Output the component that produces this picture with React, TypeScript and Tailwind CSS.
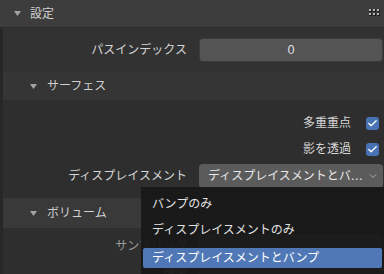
import { Check, ChevronDown } from 'lucide-react';

const FONT = 'font-["DejaVu_Sans","Noto_Sans_CJK_JP",sans-serif]';

function Tri() {
  return (
    <svg width="7" height="5" viewBox="0 0 7 5" className="shrink-0">
      <path d="M0 0 L7 0 L3.5 5 Z" fill="#a3a3a3" />
    </svg>
  );
}

function Grip() {
  return (
    <svg width="11" height="7" viewBox="0 0 11 7">
      {[0, 4, 8].map((x) =>
        [0, 4].map((y) => (
          <g key={`${x}-${y}`}>
            <rect x={x} y={y} width="3" height="3" fill="#1e1e1e" />
            <rect x={x} y={y} width="2" height="2" fill="#b4b4b4" />
          </g>
        ))
      )}
    </svg>
  );
}

function Checkbox() {
  return (
    <div className="w-[13px] h-[13px] rounded-[3px] bg-[#4772b3] flex items-center justify-center">
      <Check size={11} strokeWidth={3} color="#ffffff" />
    </div>
  );
}

export default function App() {
  return (
    <div className={`relative w-[384px] h-[274px] overflow-hidden bg-[#2d2d2d] text-[12px] leading-none text-[#d6d6d6] ${FONT}`}>
      {/* Panel header */}
      <div className="h-[28px] bg-[#3d3d3d] border-b border-[#2a2a2a] flex items-center pl-[14px] pr-[4px]">
        <Tri />
        <span className="ml-[9px] text-[#cfcfcf]">設定</span>
        <div className="ml-auto mt-[-2px]"><Grip /></div>
      </div>

      <div className="border-l-[3px] border-[#272727]">
        {/* パスインデックス */}
        <div className="bg-[#323232] pt-[10px] pb-[10px] pr-[1px] flex items-center">
          <div className="w-[184px] text-right">パスインデックス</div>
          <div className="ml-[12px] flex-1 h-[24px] rounded-[4px] bg-[#545454] border border-[#3c3c3c] flex items-center justify-center text-[#dcdcdc]">0</div>
        </div>

        {/* サーフェス */}
        <div className="h-[28px] bg-[#353535] flex items-center pl-[27px]">
          <Tri />
          <span className="ml-[10px] text-[#cfcfcf]">サーフェス</span>
        </div>
        <div className="bg-[#2e2e2e] pt-[13px] pb-[10px] pr-[1px] flex flex-col">
          <div className="h-[20px] flex items-center justify-end pr-[4px] gap-[15px]">
            <span>多重重点</span>
            <Checkbox />
          </div>
          <div className="mt-[6px] h-[20px] flex items-center justify-end pr-[4px] gap-[15px]">
            <span>影を透過</span>
            <Checkbox />
          </div>
          <div className="mt-[5px] h-[24px] flex items-center">
            <div className="w-[184px] text-right">ディスプレイスメント</div>
            <div className="ml-[12px] flex-1 h-[24px] rounded-[4px] bg-[#5b5b5b] flex items-center pl-[9px] pr-[4px] text-[#e8e8e8]">
              <span className="whitespace-nowrap">ディスプレイスメントとバ…</span>
              <ChevronDown size={12} strokeWidth={2} color="#a8a8a8" className="ml-auto" />
            </div>
          </div>
        </div>

        {/* ボリューム */}
        <div className="h-[30px] bg-[#393939] flex items-center pl-[27px]">
          <Tri />
          <span className="ml-[10px] text-[#cfcfcf]">ボリューム</span>
        </div>
        <div className="bg-[#2e2e2e] pt-[6px] pr-[1px] flex flex-col gap-[2px]">
          <div className="h-[24px] flex items-center text-[#9a9a9a]">
            <div className="w-[184px] text-right">サンプリング</div>
            <div className="ml-[12px] flex-1 h-[24px] rounded-[4px] bg-[#545454]" />
          </div>
          <div className="h-[24px] flex items-center text-[#9a9a9a]">
            <div className="w-[184px] text-right">補間</div>
            <div className="ml-[12px] flex-1 h-[24px] rounded-[4px] bg-[#545454]" />
          </div>
        </div>
      </div>

      {/* Dropdown menu */}
      <div className="absolute left-[141px] top-[187px] w-[243px] h-[87px] bg-[#181818]/[0.93] px-[2px] flex flex-col text-[#e2e2e2]">
        <div className="mt-[7px] h-[20px] flex items-center pl-[9px]">バンプのみ</div>
        <div className="mt-[6px] h-[20px] flex items-center pl-[9px]">ディスプレイスメントのみ</div>
        <div className="mt-[8px] h-[20px] w-[239px] rounded-[2px] bg-[#5078b6] flex items-center pl-[9px] text-white">ディスプレイスメントとバンプ</div>
      </div>
    </div>
  );
}
